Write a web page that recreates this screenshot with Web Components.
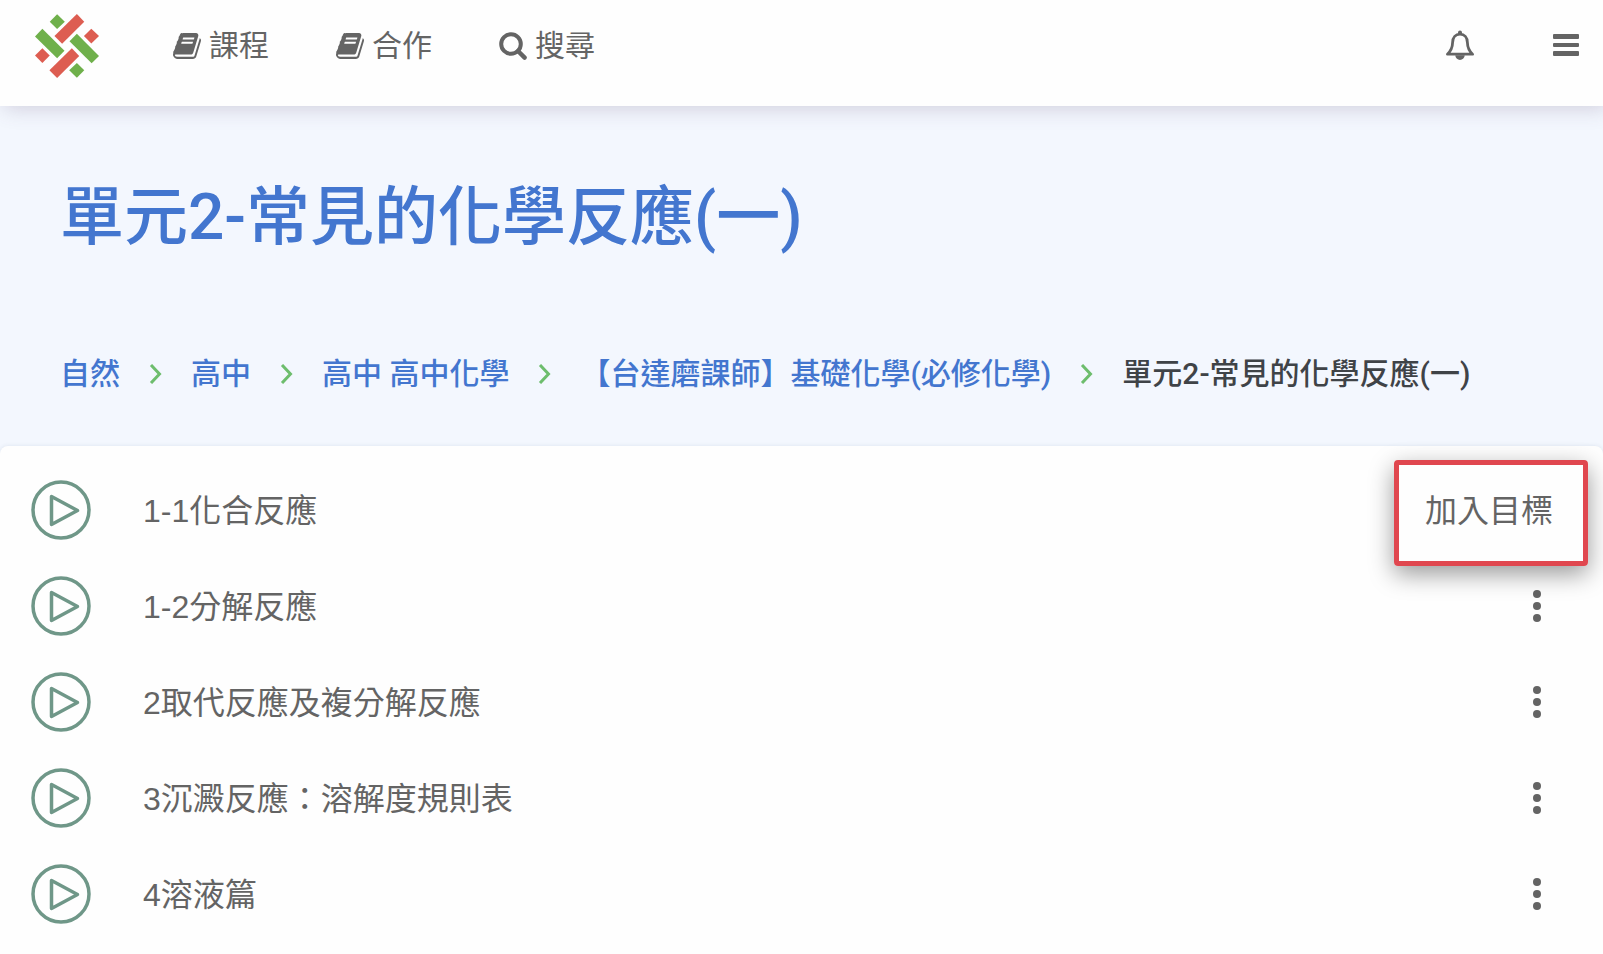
<!DOCTYPE html>
<html lang="zh-Hant">
<head>
  <meta charset="utf-8">
  <meta name="viewport" content="width=device-width, initial-scale=1">
  <title>單元2-常見的化學反應(一)</title>
  <style>
    body {
      margin: 0;
      background: #fefefe;
      color: #646464;
      font-family: "Liberation Sans", "Noto Sans CJK TC", sans-serif;
    }
  </style>
</head>
<body>
  <site-header>
    <nav-link icon="book" href="#courses">課程</nav-link>
    <nav-link icon="book" href="#groups">合作</nav-link>
    <nav-link icon="search" href="#search">搜尋</nav-link>
  </site-header>

  <main>
    <topic-hero>
      <span slot="title">單元2-常見的化學反應(一)</span>
      <crumb-item href="#science">自然</crumb-item>
      <crumb-item href="#senior">高中</crumb-item>
      <crumb-item href="#chemistry">高中 高中化學</crumb-item>
      <crumb-item href="#delta">【台達磨課師】基礎化學(必修化學)</crumb-item>
      <crumb-item current>單元2-常見的化學反應(一)</crumb-item>
    </topic-hero>

    <lesson-list>
      <lesson-row action="加入目標">1-1化合反應</lesson-row>
      <lesson-row>1-2分解反應</lesson-row>
      <lesson-row>2取代反應及複分解反應</lesson-row>
      <lesson-row>3沉澱反應：溶解度規則表</lesson-row>
      <lesson-row>4溶液篇</lesson-row>
    </lesson-list>
  </main>

  <script>
    const icons = {
      book: `<svg width="28" height="26" viewBox="0 128 1664 1536" fill="currentColor" aria-hidden="true"><path d="M1639 478q40 57 18 129l-275 906q-19 64-76.5 107.5T1183 1664H260q-77 0-148.5-53.5T12 1479q-24-67-2-127 0-4 3-27t4-37q1-8-3-21.5t-3-19.5q2-11 8-21t16.5-23.5T52 1179q23-38 45-91.5t30-91.5q3-10 .5-30t-.5-28q3-11 17-28t17-23q21-36 42-92t25-90q1-9-2.5-32t.5-28q4-13 22-30.5t22-22.5q19-26 42.5-84.5T340 411q1-8-3-25.5t-2-26.5q2-8 9-18t18-23 17-21q8-12 16.5-30.5t15-35 16-36 19.5-32 26.5-23.5 36-11.5T556 134l-1 3q38-9 51-9h761q74 0 114 56t18 130l-274 906q-36 119-71.5 153.5T1025 1408H156q-27 0-38 15-11 16-1 43 24 70 144 70h923q29 0 56-15.5t35-41.5l300-987q7-22 5-57 38 15 59 43zM575 480q-4 13 2 22.5t20 9.5h608q13 0 25.5-9.5T1247 480l21-64q4-13-2-22.5t-20-9.5H638q-13 0-25.5 9.5T596 416zm-83 256q-4 13 2 22.5t20 9.5h608q13 0 25.5-9.5T1164 736l21-64q4-13-2-22.5t-20-9.5H555q-13 0-25.5 9.5T513 672z"/></svg>`,
      search: `<svg width="28" height="28" viewBox="0 0 28 28" fill="none" stroke="currentColor" aria-hidden="true"><circle cx="12" cy="12" r="9.8" stroke-width="4"/><path d="M19 19l6.6 6.6" stroke-width="4.4" stroke-linecap="round"/></svg>`
    };

    class SiteHeader extends HTMLElement {
      constructor() {
        super();
        this.attachShadow({ mode: 'open' });
        this.shadowRoot.innerHTML = `
          <style>
            :host {
              display: block;
              position: relative;
              z-index: 1;
              background: #fefefe;
              box-shadow: 4px 2px 20px rgba(90, 70, 110, 0.24);
            }
            header {
              display: flex;
              align-items: center;
              height: 92px;
              padding: 0 20px 14px 35px;
            }
            .logo, svg { display: block; }
            nav {
              display: flex;
              flex: 1;
              gap: 67px;
              margin-left: 74px;
            }
            .tools {
              display: flex;
              align-items: center;
              gap: 70px;
            }
            button {
              padding: 0 4px;
              border: 0;
              background: none;
              color: inherit;
              cursor: pointer;
            }
          </style>
          <header>
            <a class="logo" href="#home" aria-label="首頁">
              <svg width="64" height="64" viewBox="0 0 191 191">
                <g fill="#6fb04b">
                  <path d="M66 1l23 22-23 22-22-22z"/>
                  <path d="M22 44l66 66-22 22L0 67z"/>
                  <path d="M125 59l66 66-22 22-66-66z"/>
                  <path d="M125 146l22 22-22 22-23-22z"/>
                </g>
                <g fill="#dd5d51">
                  <path d="M125 0l22 23-66 66-23-23z"/>
                  <path d="M168 44l23 22-23 22-22-22z"/>
                  <path d="M22 102l22 22-22 22-22-22z"/>
                  <path d="M110 102l22 23-66 66-23-23z"/>
                </g>
              </svg>
            </a>
            <nav><slot></slot></nav>
            <div class="tools">
              <button type="button" aria-label="通知">
                <svg width="30" height="32" viewBox="0 0 30 32">
                  <path d="M2.4 24.2c4.4-4 5.1-7.4 5.2-11.7C7.7 7.3 10.6 4.2 15 4.2s7.3 3.1 7.4 8.3c.1 4.3.8 7.7 5.2 11.7z" fill="none" stroke="currentColor" stroke-width="2.8" stroke-linejoin="round"/>
                  <path d="M13 4V2.5a2 2 0 0 1 4 0V4zM10.3 25.2h9.400a4.700 4.700 0 0 1-9.400 0z" fill="currentColor"/>
                </svg>
              </button>
              <button type="button" aria-label="選單">
                <svg width="26" height="24" viewBox="0 0 26 24" fill="currentColor">
                  <rect y="0" width="26" height="5" rx="1"/>
                  <rect y="9" width="26" height="4" rx="1"/>
                  <rect y="17" width="26" height="5" rx="1"/>
                </svg>
              </button>
            </div>
          </header>
        `;
      }
    }

    class NavLink extends HTMLElement {
      constructor() {
        super();
        this.attachShadow({ mode: 'open' });
      }

      connectedCallback() {
        this.shadowRoot.innerHTML = `
          <style>
            :host { display: block; }
            a {
              display: flex;
              align-items: center;
              gap: 8px;
              color: inherit;
              font-size: 30px;
              line-height: 40px;
              text-decoration: none;
            }
          </style>
          <a href="${this.getAttribute('href')}">${icons[this.getAttribute('icon')]}<slot></slot></a>
        `;
      }
    }

    class TopicHero extends HTMLElement {
      constructor() {
        super();
        this.attachShadow({ mode: 'open' });
        this.shadowRoot.innerHTML = `
          <style>
            :host {
              display: block;
              padding: 68px 60px 52px;
              background: #f3f7fe;
              font-family: Roboto, "Noto Sans CJK TC", sans-serif;
              font-weight: 500;
            }
            h1 {
              margin: 0;
              color: #4376cf;
              font-size: 64px;
              font-weight: 500;
              line-height: 88px;
            }
            nav {
              display: flex;
              flex-wrap: wrap;
              margin-top: 92px;
            }
          </style>
          <h1><slot name="title"></slot></h1>
          <nav aria-label="路徑"><slot></slot></nav>
        `;
      }
    }

    class CrumbItem extends HTMLElement {
      constructor() {
        super();
        this.attachShadow({ mode: 'open' });
      }

      connectedCallback() {
        const current = this.hasAttribute('current');
        this.shadowRoot.innerHTML = `
          <style>
            :host {
              display: flex;
              align-items: center;
              color: #3f4347;
              font-size: 30px;
              line-height: 40px;
            }
            a {
              color: #4376cf;
              text-decoration: none;
            }
            svg { margin: 0 29px; }
          </style>
          ${current ? '<span aria-current="page"><slot></slot></span>' : `
            <a href="${this.getAttribute('href')}"><slot></slot></a>
            <svg width="13" height="20" viewBox="0 0 13 20" fill="none" stroke="#6dbd6d" stroke-width="3" aria-hidden="true"><path d="M2 1l8.5 9L2 19"/></svg>
          `}
        `;
      }
    }

    class LessonList extends HTMLElement {
      constructor() {
        super();
        this.attachShadow({ mode: 'open' });
        this.shadowRoot.innerHTML = `
          <style>
            :host {
              display: block;
              background: #f3f7fe;
            }
            div {
              padding: 16px 0 12px;
              border-radius: 8px 8px 0 0;
              background: #fefefe;
              box-shadow: 0 0 4px rgba(60, 80, 120, 0.12);
            }
          </style>
          <div role="list"><slot></slot></div>
        `;
      }
    }

    class LessonRow extends HTMLElement {
      constructor() {
        super();
        this.attachShadow({ mode: 'open' });
      }

      connectedCallback() {
        const action = this.getAttribute('action');
        this.setAttribute('role', 'listitem');
        this.shadowRoot.innerHTML = `
          <style>
            :host {
              display: flex;
              align-items: center;
              height: 96px;
              padding: 0 50px 0 31px;
              font-size: 32px;
              line-height: 48px;
            }
            a {
              display: flex;
              flex: 1;
              align-items: center;
              gap: 52px;
              color: inherit;
              text-decoration: none;
            }
            span, .action { padding-top: 2px; }
            svg { display: block; }
            button {
              padding: 0;
              border: 0;
              background: none;
              color: inherit;
              font: inherit;
              cursor: pointer;
            }
            .action { position: relative; }
            /* frame that draws attention to the action */
            .action::after {
              content: "";
              position: absolute;
              inset: -25px -35px -31px -31px;
              border: 5px solid #e0474f;
              border-radius: 4px;
              box-shadow: 0 8px 24px rgba(0, 0, 0, 0.4);
            }
          </style>
          <a href="#lesson">
            <svg width="60" height="60" viewBox="0 0 60 60" fill="none" stroke="#6f9788" stroke-width="3.5" aria-hidden="true">
              <circle cx="30" cy="30" r="28"/>
              <path d="M20.5 16.5v28L46.5 30.5z" stroke-linejoin="round"/>
            </svg>
            <span><slot></slot></span>
          </a>
          ${action ? `<button class="action" type="button">${action}</button>` : `
            <button type="button" aria-label="更多">
              <svg width="32" height="32" viewBox="0 0 32 32" fill="currentColor"><circle cx="16" cy="4" r="4"/><circle cx="16" cy="16" r="4"/><circle cx="16" cy="28" r="4"/></svg>
            </button>
          `}
        `;
      }
    }

    customElements.define('site-header', SiteHeader);
    customElements.define('nav-link', NavLink);
    customElements.define('topic-hero', TopicHero);
    customElements.define('crumb-item', CrumbItem);
    customElements.define('lesson-list', LessonList);
    customElements.define('lesson-row', LessonRow);
  </script>
</body>
</html>
